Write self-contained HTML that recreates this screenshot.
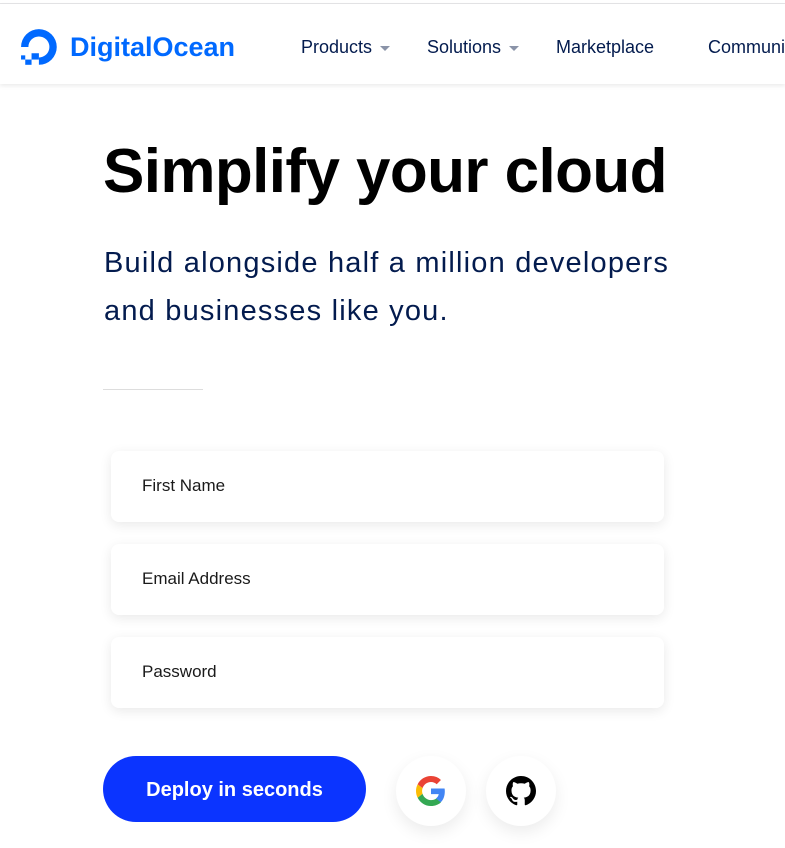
<!DOCTYPE html>
<html><head><style>
body{margin:0;width:785px;height:848px;overflow:hidden;background:#fff;font-family:"Liberation Sans",sans-serif;position:relative}
.top{position:absolute;top:0;left:0;right:0;height:3px;background:#fff;border-bottom:1px solid #e4e4e6}
.hdr{position:absolute;top:4px;left:0;right:0;height:80px;background:#fff;box-shadow:0 2px 4px rgba(0,0,0,.08)}
.logo{position:absolute;left:70px;top:28px;font-size:27px;font-weight:bold;color:#0069ff;letter-spacing:0}
.nav{position:absolute;top:37px;font-size:18px;color:#031b4e;white-space:nowrap}
.caret{display:inline-block;width:0;height:0;border-left:5px solid transparent;border-right:5px solid transparent;border-top:5px solid #8a93a8;margin-left:8px;vertical-align:middle}
h1{position:absolute;left:103px;top:136px;margin:0;font-size:62px;font-weight:bold;color:#000;letter-spacing:-0.6px;white-space:nowrap}
.sub{position:absolute;left:104px;top:239px;font-size:29px;line-height:48px;color:#031b4e;width:600px;letter-spacing:1.2px}
.div{position:absolute;left:103px;top:389px;width:100px;height:1px;background:#ddd}
.in{position:absolute;left:111px;width:553px;height:71px;background:#fff;border-radius:8px;box-shadow:0 3px 12px rgba(0,0,0,.09)}
.in span{position:absolute;left:31px;top:25px;font-size:17px;color:#1a1a1a}
.btn{position:absolute;left:103px;top:756px;width:263px;height:66px;border-radius:33px;background:#0b34ff;color:#fff;font-weight:bold;font-size:20px;text-align:center;line-height:68px}
.c{position:absolute;top:756px;width:70px;height:70px;border-radius:50%;background:#fff;box-shadow:0 6px 16px rgba(0,0,0,.08)}
.c svg{position:absolute;left:20px;top:20px}
</style></head><body>
<div class="top"></div>
<div class="hdr">
<svg style="position:absolute;left:20px;top:23px" width="42" height="42" viewBox="0 0 40 40">
<path d="M18 36 V29 A10 10 0 1 0 8 19 H1 A17 17 0 1 1 18 36Z" fill="#0069ff"/>
<rect x="11" y="25" width="7" height="6" fill="#0069ff"/>
<rect x="5" y="31" width="6" height="5" fill="#0069ff"/>
<rect x="1" y="27" width="4" height="4" fill="#0069ff"/>
</svg>
<div class="logo">DigitalOcean</div>
</div>
<div class="nav" style="left:301px">Products<span class="caret"></span></div>
<div class="nav" style="left:427px">Solutions<span class="caret"></span></div>
<div class="nav" style="left:556px">Marketplace</div>
<div class="nav" style="left:708px">Community</div>
<h1>Simplify your cloud</h1>
<div class="sub">Build alongside half a million developers and businesses like you.</div>
<div class="div"></div>
<div class="in" style="top:451px"><span>First Name</span></div>
<div class="in" style="top:544px"><span>Email Address</span></div>
<div class="in" style="top:637px"><span>Password</span></div>
<div class="btn">Deploy in seconds</div>
<div class="c" style="left:396px"><svg width="30" height="30" viewBox="0 0 48 48">
<path fill="#EA4335" d="M24 9.5c3.5 0 6.6 1.2 9.1 3.6l6.8-6.8C35.8 2.4 30.3 0 24 0 14.6 0 6.6 5.4 2.6 13.3l7.9 6.1C12.4 13.7 17.7 9.5 24 9.5z"/>
<path fill="#4285F4" d="M46.1 24.5c0-1.6-.1-3.1-.4-4.5H24v9h12.4c-.5 2.9-2.2 5.4-4.7 7.1l7.7 6c4.5-4.2 6.7-10.3 6.7-17.6z"/>
<path fill="#FBBC05" d="M10.5 28.6c-.5-1.4-.8-3-.8-4.6s.3-3.2.8-4.6l-7.9-6.1C.9 16.5 0 20.1 0 24s.9 7.5 2.6 10.7l7.9-6.1z"/>
<path fill="#34A853" d="M24 48c6.5 0 11.9-2.1 15.9-5.8l-7.7-6c-2.2 1.5-5 2.3-8.2 2.3-6.3 0-11.6-4.2-13.5-9.9l-7.9 6.1C6.6 42.6 14.6 48 24 48z"/>
</svg></div>
<div class="c" style="left:486px"><svg width="30" height="30" viewBox="0 0 16 16"><path fill="#000" d="M8 0C3.58 0 0 3.58 0 8c0 3.54 2.29 6.53 5.47 7.59.4.07.55-.17.55-.38 0-.19-.01-.82-.01-1.49-2.01.37-2.53-.49-2.69-.94-.09-.23-.48-.94-.82-1.13-.28-.15-.68-.52-.01-.53.63-.01 1.08.58 1.23.82.72 1.21 1.87.87 2.33.66.07-.52.28-.87.51-1.07-1.78-.2-3.64-.89-3.64-3.95 0-.87.31-1.59.82-2.15-.08-.2-.36-1.02.08-2.12 0 0 .67-.21 2.2.82.64-.18 1.32-.27 2-.27.68 0 1.36.09 2 .27 1.53-1.04 2.2-.82 2.2-.82.44 1.1.16 1.92.08 2.12.51.56.82 1.27.82 2.15 0 3.07-1.87 3.75-3.65 3.95.29.25.54.73.54 1.48 0 1.07-.01 1.93-.01 2.2 0 .21.15.46.55.38A8.013 8.013 0 0016 8c0-4.42-3.58-8-8-8z"/></svg></div>
</body></html>
